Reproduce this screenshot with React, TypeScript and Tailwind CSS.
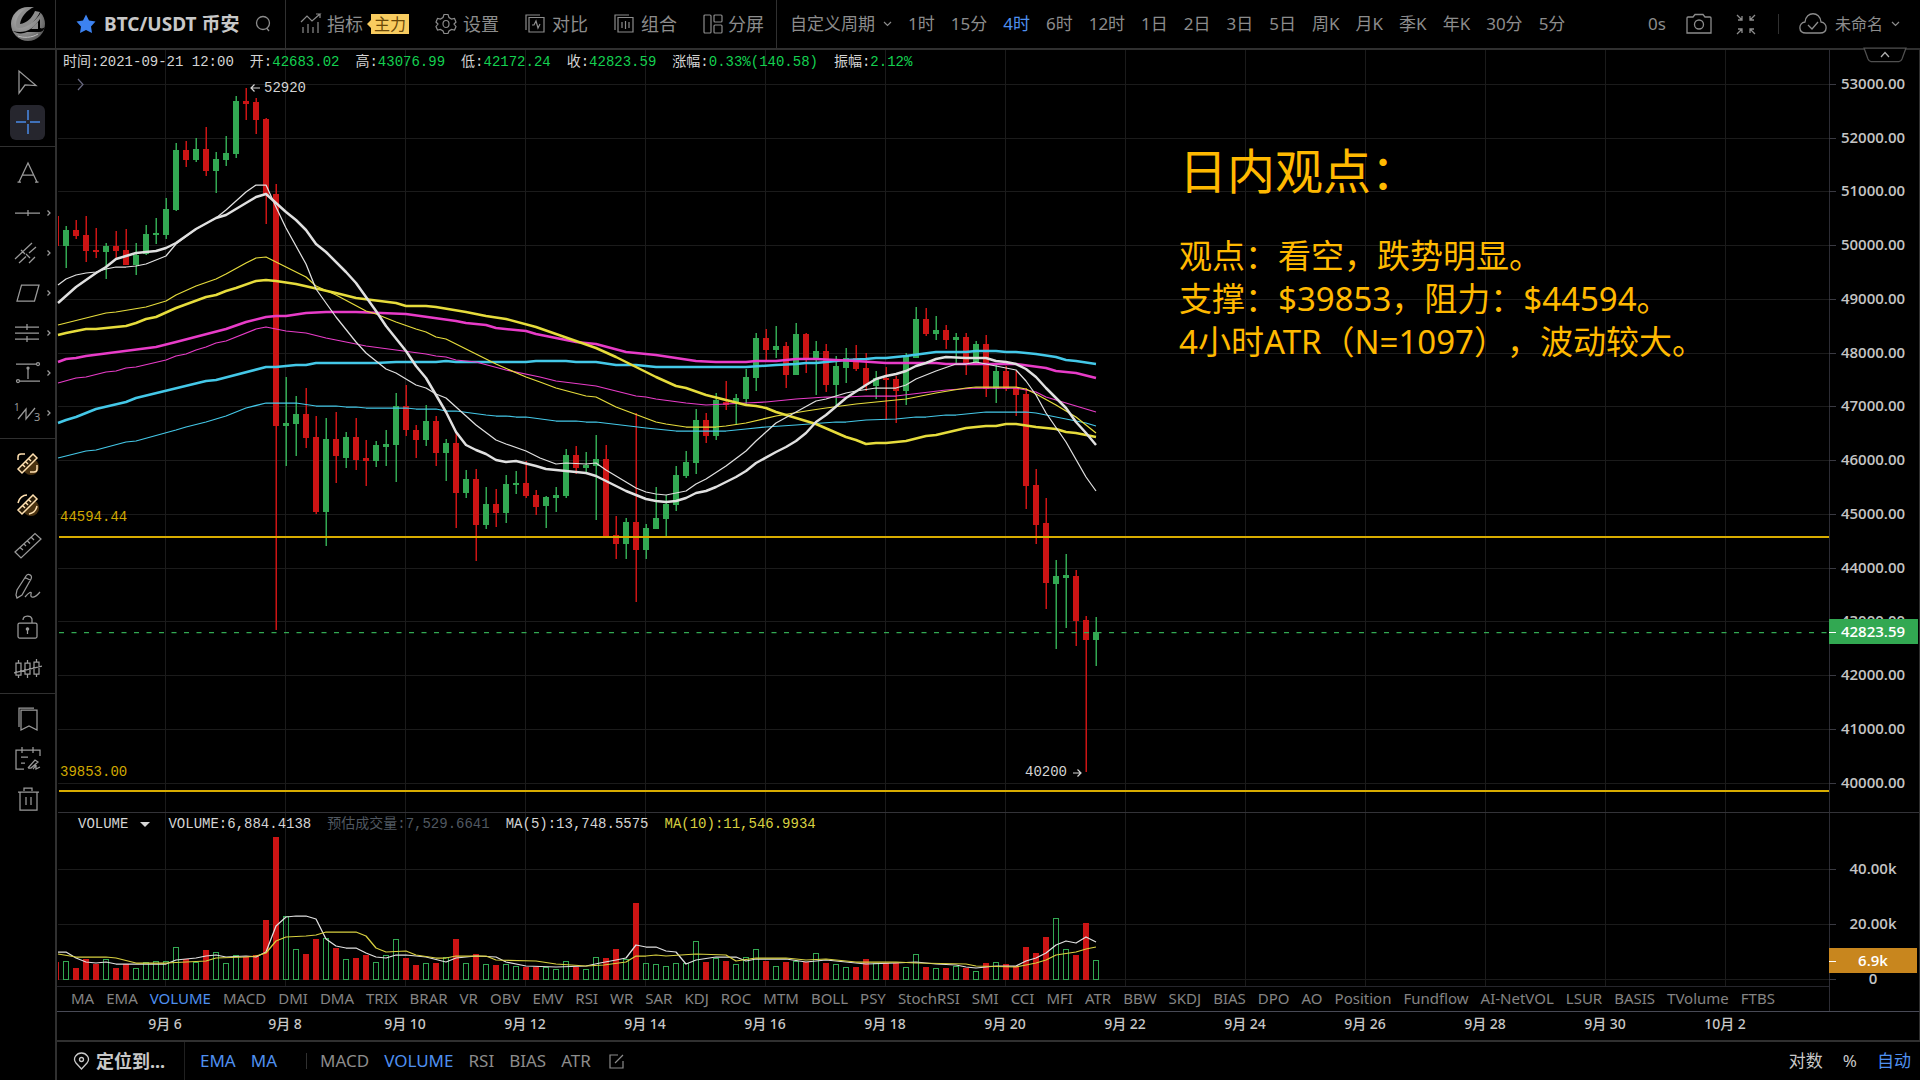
import { useState } from 'react';
import type { ReactNode } from 'react';

type Candle = [up: 0 | 1, high: number, top: number, bottom: number, low: number, volume: number];

// 每根K线：[涨跌, 最高, 实体上沿, 实体下沿, 最低, 成交量柱顶]
const candles: Candle[] = [
  [0, 216, 216, 246, 246, 962], [1, 226, 230, 246, 268, 961], [0, 220, 230, 236, 239, 968], [0, 216, 235, 251, 262, 959],
  [0, 228, 250, 252, 258, 964], [1, 243, 246, 252, 279, 959], [0, 231, 246, 251, 259, 968], [0, 229, 250, 265, 265, 964],
  [1, 243, 255, 265, 275, 968], [1, 225, 234, 254, 255, 962], [1, 218, 233, 235, 244, 961], [1, 198, 209, 235, 239, 961],
  [1, 143, 150, 210, 211, 947], [0, 141, 150, 160, 167, 959], [1, 138, 149, 160, 162, 962], [0, 127, 149, 171, 176, 950],
  [1, 152, 159, 171, 193, 952], [1, 136, 153, 160, 166, 963], [1, 96, 101, 154, 158, 955], [0, 88, 101, 104, 120, 957],
  [0, 98, 102, 120, 134, 955], [0, 118, 119, 195, 224, 920], [0, 184, 194, 426, 630, 837], [1, 377, 423, 426, 466, 916],
  [1, 396, 414, 424, 456, 949], [0, 388, 414, 438, 448, 954], [0, 416, 437, 512, 514, 939], [1, 418, 439, 512, 546, 938],
  [0, 412, 439, 456, 483, 948], [1, 432, 437, 458, 468, 959], [0, 418, 437, 460, 470, 958], [0, 440, 458, 461, 486, 955],
  [1, 441, 445, 461, 467, 962], [1, 430, 444, 447, 466, 955], [1, 393, 406, 445, 482, 939], [0, 385, 406, 430, 436, 958],
  [0, 425, 430, 440, 458, 965], [1, 405, 421, 440, 446, 963], [0, 416, 421, 453, 466, 963], [1, 439, 443, 453, 481, 957],
  [0, 433, 443, 493, 528, 939], [1, 470, 479, 493, 498, 963], [0, 469, 479, 525, 561, 954], [1, 487, 504, 525, 529, 964],
  [0, 489, 504, 513, 527, 965], [1, 475, 484, 513, 523, 964], [1, 471, 483, 485, 494, 966], [0, 461, 483, 496, 498, 967],
  [0, 490, 495, 507, 515, 967], [1, 496, 497, 506, 528, 967], [1, 487, 495, 498, 512, 969], [1, 449, 455, 496, 498, 961],
  [0, 446, 455, 468, 474, 967], [1, 452, 465, 468, 472, 969], [1, 435, 459, 466, 520, 957], [0, 445, 459, 536, 536, 958],
  [0, 516, 535, 544, 559, 949], [1, 518, 522, 544, 559, 959], [0, 413, 522, 550, 602, 903], [1, 524, 528, 550, 559, 963],
  [1, 487, 518, 529, 529, 964], [1, 495, 504, 519, 537, 966], [1, 466, 475, 505, 511, 963], [1, 451, 462, 476, 478, 963],
  [1, 409, 420, 463, 474, 941], [0, 413, 420, 436, 443, 962], [1, 393, 400, 436, 440, 958], [0, 381, 402, 405, 410, 961],
  [1, 394, 398, 403, 424, 964], [1, 369, 377, 399, 404, 957], [1, 333, 338, 378, 391, 949], [0, 329, 338, 350, 360, 961],
  [1, 326, 346, 350, 358, 966], [0, 342, 346, 375, 388, 962], [1, 323, 334, 375, 375, 961], [0, 333, 334, 360, 373, 962],
  [1, 341, 351, 360, 395, 953], [0, 344, 351, 385, 392, 963], [1, 356, 366, 385, 405, 964], [1, 348, 358, 368, 383, 967],
  [0, 345, 358, 369, 371, 967], [0, 353, 368, 385, 391, 959], [1, 371, 378, 386, 399, 963], [0, 367, 378, 380, 420, 963],
  [0, 376, 379, 391, 423, 963], [1, 353, 356, 391, 405, 967], [1, 307, 319, 358, 358, 954], [0, 308, 319, 334, 336, 967],
  [1, 316, 330, 334, 340, 968], [0, 325, 330, 340, 349, 968], [1, 333, 337, 340, 363, 966], [0, 333, 337, 363, 375, 968],
  [1, 341, 344, 363, 363, 971], [0, 335, 344, 389, 397, 963], [1, 365, 371, 389, 403, 962], [0, 366, 371, 389, 391, 964],
  [0, 371, 388, 395, 416, 966], [0, 388, 394, 486, 509, 947], [0, 469, 485, 525, 544, 953], [0, 498, 523, 583, 609, 937],
  [1, 560, 576, 584, 649, 918], [1, 554, 575, 578, 628, 949], [0, 570, 576, 621, 646, 955], [0, 616, 620, 640, 772, 923],
  [1, 617, 632, 640, 666, 960],
];

const averages = [
  {
    color: '#44c8e8',
    width: 1.25,
    points: '58,458 86,451 96,450 126,442 136,441 176,430 186,427 206,422 226,416 246,408 266,403 296,403 316,406 336,406 346,407 356,407 366,408 406,408 416,409 436,409 446,411 456,411 486,415 496,416 506,416 516,417 526,417 556,421 576,421 586,422 596,422 646,428 676,431 726,431 746,429 766,427 796,425 836,422 846,422 866,420 896,419 916,417 926,417 946,415 956,415 986,412 1026,412 1036,413 1046,415 1086,423 1096,426',
  },
  {
    color: '#44c8e8',
    width: 2.5,
    points: '58,423 66,420 76,417 96,409 126,402 136,398 206,381 216,380 266,367 276,367 296,365 306,365 316,363 376,363 396,362 436,362 446,361 456,362 526,362 536,361 566,361 576,362 596,362 616,365 636,365 656,367 746,367 776,365 796,364 806,363 816,363 846,360 866,359 876,358 886,358 906,356 936,352 966,352 976,351 996,351 1006,352 1016,352 1036,354 1056,357 1066,360 1076,361 1096,364',
  },
  {
    color: '#e83cc8',
    width: 1.25,
    points: '58,383 76,378 86,377 106,372 116,371 126,368 136,367 166,360 176,356 186,354 196,350 206,347 216,343 226,341 256,329 266,327 286,331 306,333 326,338 336,340 346,342 366,346 426,354 436,356 446,357 456,360 476,362 506,370 540,377 556,381 596,386 636,396 646,397 656,399 686,403 706,405 746,403 766,402 776,401 796,399 826,397 846,397 866,396 896,396 946,390 976,388 1016,388 1026,390 1036,392 1046,397 1056,400 1066,403 1096,412',
  },
  {
    color: '#e83cc8',
    width: 2.5,
    points: '58,362 66,359 76,358 86,356 156,347 176,342 226,329 246,322 266,317 276,316 286,316 306,313 326,312 356,312 406,314 456,321 466,323 486,325 496,328 526,331 536,334 556,338 576,342 596,344 626,352 656,355 696,361 716,362 746,362 756,361 776,361 796,359 816,359 856,361 886,363 936,363 946,364 1016,364 1046,368 1056,371 1076,373 1096,378',
  },
  {
    color: '#e6dc3c',
    width: 1.25,
    points: '58,325 106,313 116,312 146,307 166,301 176,295 196,286 216,279 226,274 246,263 256,258 266,257 306,277 316,286 336,295 366,311 376,314 396,322 416,329 426,332 436,337 446,339 496,364 526,377 540,382 556,388 586,396 596,397 616,407 656,422 666,424 686,427 716,427 726,426 746,423 776,416 806,411 826,408 856,404 866,403 886,401 906,399 936,393 966,388 976,387 1016,387 1026,389 1036,394 1056,405 1076,417 1096,433',
  },
  {
    color: '#e6dc3c',
    width: 2.5,
    points: '58,335 66,333 86,329 96,329 126,326 136,323 146,319 156,317 176,308 206,297 216,295 226,291 236,288 256,281 266,280 276,281 296,284 336,293 356,298 396,303 406,306 426,306 436,307 466,312 486,316 506,319 536,327 576,341 596,348 616,357 636,367 656,377 676,386 686,388 706,395 746,405 756,406 766,408 776,412 816,424 846,437 856,440 866,444 876,443 886,443 906,441 926,436 936,435 966,428 986,426 996,426 1006,424 1016,424 1036,427 1056,429 1066,432 1076,433 1096,437',
  },
  {
    color: '#e0e0e0',
    width: 1.25,
    points: '58,285 66,279 76,275 86,273 96,272 106,269 116,267 126,267 136,266 146,264 166,256 176,244 196,229 216,218 226,210 236,201 246,192 256,185 266,185 276,207 286,228 306,264 316,289 336,317 356,342 366,353 386,369 396,373 416,385 426,388 436,394 446,398 456,407 466,416 476,425 496,440 506,444 526,451 540,458 556,464 566,463 586,464 596,463 606,470 616,476 626,482 636,488 646,492 656,494 666,495 686,491 696,484 706,479 726,466 746,451 756,441 776,423 796,412 816,401 826,399 846,393 856,391 876,388 896,388 906,385 916,379 936,371 956,364 966,364 976,362 986,364 1006,368 1016,370 1026,381 1036,395 1046,413 1066,442 1086,477 1096,491',
  },
  {
    color: '#e0e0e0',
    width: 2.5,
    points: '58,303 76,287 96,273 106,267 116,259 126,256 136,253 156,251 166,248 176,243 196,229 216,218 226,215 246,203 256,197 266,194 286,212 296,220 306,230 316,244 326,252 346,272 356,283 376,311 386,326 406,351 416,366 426,378 436,395 446,412 456,432 466,445 476,450 486,454 496,460 506,462 516,461 536,466 546,469 566,471 586,473 596,476 606,481 626,491 646,499 656,501 666,502 676,501 686,498 696,493 706,491 716,487 736,477 746,471 756,463 776,452 786,447 796,441 806,433 816,422 826,415 846,398 866,385 876,379 886,376 896,374 906,371 916,366 926,363 936,359 946,357 966,358 986,358 996,361 1006,362 1016,364 1026,369 1036,377 1046,388 1066,408 1076,422 1086,433 1096,445',
  },
];

const volumeMa5 =
  '58,952 66,952 76,958 86,962 96,963 106,962 116,964 136,964 166,964 176,960 196,958 206,956 216,955 226,957 246,956 256,957 266,952 276,926 286,917 296,916 306,916 316,919 326,939 336,946 346,948 356,948 366,953 376,957 386,958 396,955 406,955 426,957 446,962 456,958 476,956 496,957 506,962 526,966 556,967 586,966 600,963 616,960 626,958 636,945 646,947 656,947 666,951 676,952 686,964 696,960 716,957 736,957 746,961 756,959 786,959 806,962 826,960 866,964 896,963 916,962 936,964 956,965 966,967 976,968 996,966 1016,966 1026,961 1036,958 1046,953 1056,945 1066,941 1076,943 1086,937 1096,942';
const volumeMa10 =
  '58,954 76,957 106,957 116,958 136,963 166,963 206,961 216,958 246,957 256,956 266,953 276,941 286,937 306,936 316,935 326,932 356,932 366,936 376,948 386,952 406,951 416,955 436,958 446,958 456,956 486,956 496,960 536,961 556,964 586,966 604,965 626,962 636,956 646,956 656,955 666,956 696,954 726,955 736,961 756,958 786,958 806,960 826,959 856,962 896,962 916,963 966,964 976,966 1016,967 1026,965 1036,963 1046,960 1056,955 1076,952 1086,949 1096,947';

const periods = ['1时', '15分', '4时', '6时', '12时', '1日', '2日', '3日', '5日', '周K', '月K', '季K', '年K', '30分', '5分'];

const indicators = [
  'MA', 'EMA', 'VOLUME', 'MACD', 'DMI', 'DMA', 'TRIX', 'BRAR', 'VR', 'OBV', 'EMV', 'RSI', 'WR', 'SAR', 'KDJ', 'ROC', 'MTM',
  'BOLL', 'PSY', 'StochRSI', 'SMI', 'CCI', 'MFI', 'ATR', 'BBW', 'SKDJ', 'BIAS', 'DPO', 'AO', 'Position', 'Fundflow',
  'AI-NetVOL', 'LSUR', 'BASIS', 'TVolume', 'FTBS',
];

const dates = [
  '9月 6', '9月 8', '9月 10', '9月 12', '9月 14', '9月 16', '9月 18', '9月 20', '9月 22', '9月 24', '9月 26', '9月 28',
  '9月 30', '10月 2',
];

const prices = Array.from({ length: 14 }, (_, i) => 53000 - i * 1000);
const priceY = (price: number) => Math.floor(84.3 + (53000 - price) * 0.05377);

const RED = '#cc1414';
const GREEN = '#32a852';
const GRID = '#1b1b1b';
const MONO = "font-['Liberation_Mono','Noto_Sans_CJK_SC',monospace]";

function Icon({ w = 28, h = 28, sw = 1.25, children }: { w?: number; h?: number; sw?: number; children: ReactNode }) {
  return (
    <svg width={w} height={h} viewBox={`0 0 ${w} ${h}`} fill="none" stroke="currentColor" strokeWidth={sw} className="shrink-0" aria-hidden="true">
      {children}
    </svg>
  );
}

function Logo() {
  return (
    <svg width="36" height="36" viewBox="0 0 36 36" aria-hidden="true">
      <defs>
        <radialGradient id="ball" cx="0.35" cy="0.35" r="0.8">
          <stop offset="0" stopColor="#b0b0b0" />
          <stop offset="0.6" stopColor="#858585" />
          <stop offset="1" stopColor="#4c4c4c" />
        </radialGradient>
      </defs>
      <circle cx="18" cy="18" r="17" fill="url(#ball)" />
      {/* 上方羽翼 */}
      <path d="M7 19C7 11 13 4 22 1C27 1 30 3 31 6C27 14 19 20 11 20C9 20 7 20 7 19Z" fill="#000" />
      <path d="M6 19C6 11 11 4 20 1L24 1C17 4 11 11 10 18C17 17 22 12 25 5L30 6C26 15 18 22 9 22C7 22 6 21 6 19Z" fill="#8c8c8c" />
      {/* 下方弧线 */}
      <path d="M3 25C14 28 23 24 30 13L30 22C32 23 34 22 35 21C34 24 32 26 29 26L17 26C13 28 7 28 3 25Z" fill="#000" />
      <path d="M21 23L28 16L28 23Z" fill="#8a8a8a" />
      <path d="M8 30C13 32 22 32 28 28" stroke="#bdbdbd" fill="none" />
    </svg>
  );
}

const toolGroups: { className: string; itemClass: string; tools: { name: string; more?: boolean; icon: ReactNode }[] }[] = [
  {
    className: 'pt-3 pb-1',
    itemClass: 'h-10',
    tools: [
      { name: '光标', icon: <path d="M5 3V25L11 17L22 17.500Z" /> },
      { name: '十字光标', icon: <path strokeWidth="1.500" d="M2 14H12M16 14H26M14 2V12M14 16V26" /> },
    ],
  },
  {
    className: 'pt-[6px] pb-[5px]',
    itemClass: 'h-10',
    tools: [
      { name: '文字', icon: <path d="M5 23L14 4L23 23M8.500 16H19.500M3.500 23H7M21 23H24.500" /> },
      { name: '线段', more: true, icon: <path d="M1 14H26M14 11V17" /> },
      { name: '通道', more: true, icon: <path d="M1 20L18 4M5 24L12 17.500M15 14L22 8M15 24L21 18M7 11L11 15M12 15L16 19" /> },
      { name: '形状', more: true, icon: <path d="M7.500 6H25L20.500 22H3Z" /> },
      { name: '水平线', more: true, icon: <path d="M1 8H25M1 14H25M1 20H25M13 5V11M13 17V23" /> },
      {
        name: '测距',
        more: true,
        icon: (
          <>
            <path d="M2 5H22M6 22H26M14 9V20" />
            <circle cx="24" cy="5" r="1.500" />
            <circle cx="4" cy="22" r="1.500" />
            <circle cx="14" cy="9" r="1" />
          </>
        ),
      },
      {
        name: '波浪',
        more: true,
        icon: (
          <>
            <path d="M4 20L12 10V20L21 9" />
            <text x="0" y="12" fontSize="10" fill="currentColor" stroke="none">1</text>
            <text x="20" y="22" fontSize="11" fill="currentColor" stroke="none">3</text>
          </>
        ),
      },
    ],
  },
  {
    className: 'pt-1 pb-1',
    itemClass: 'h-[41px]',
    tools: [
      {
        name: '矩形测量',
        icon: (
          <g stroke="#ffe0b0" strokeWidth="1.500">
            <circle cx="17" cy="17" r="8" fill="#4a3210" stroke="none" />
            <path d="M4 10V7Q4 4 7 4H11M23 15V19Q23 22 20 22H16" />
            <path d="M4 19L19 4L23 8L8 23ZM9 15L11 17M12 12L14 14M15 9L17 11" fill="#2a1c08" />
          </g>
        ),
      },
      {
        name: '圆形测量',
        icon: (
          <g stroke="#ffe0b0" strokeWidth="1.500">
            <circle cx="17" cy="17" r="8" fill="#4a3210" stroke="none" />
            <path d="M4 12C5 7 9 4 13 4M23 15C22 20 20 22 15 23" />
            <path d="M4 19L19 4L23 8L8 23ZM9 15L11 17M12 12L14 14M15 9L17 11" fill="#2a1c08" />
          </g>
        ),
      },
      { name: '尺子', icon: <path d="M1 20L21 1.500L27 7L7 26ZM6 15.500L9 18M10 12L12 14M13.500 9L16 11.500M17.500 5.500L20 8" /> },
      { name: '画笔', icon: <path d="M2 22L3 17L12 3C14 0 19 2 17 6L8 22L3 25ZM11 4.500L17 7.500M11 24C15 19 18 18 17 21C16 26 21 25 26 19" /> },
      {
        name: '锁定',
        icon: (
          <>
            <rect x="4" y="9" width="19" height="15" rx="1.500" />
            <path d="M9 6C9 1 17 1 18 5V9M13.500 16V20" />
            <circle cx="13.500" cy="15" r="1.200" fill="currentColor" />
          </>
        ),
      },
      {
        name: 'K线形态',
        icon: <path d="M2 8H7V20H2ZM11 8H16V19H11ZM20 7H25V19H20ZM4.500 5V8M4.500 20V23M13.500 5V8M13.500 19V23M22.500 4V7M22.500 19V22M0 18L28 11" />,
      },
    ],
  },
  {
    className: 'pt-[5px]',
    itemClass: 'h-10',
    tools: [
      { name: '书签', icon: <path d="M7 5H23V25L15 21L7 25ZM5 22V3H20" /> },
      { name: '笔记', icon: <path d="M10 24H2V5H26V11M8 2V8M19 2V8M7 12H14M7 18H11M14 23L21 15L24 17L17 23H14M19 24L22 20V24L26 22" /> },
      { name: '删除', icon: <path d="M4 7H25M6 7V25H23V7M10 6V3H18V6M12 12V20M17 12V20" /> },
    ],
  },
];

function Toolbar() {
  const [active, setActive] = useState('十字光标');
  return (
    <aside className="w-[57px] shrink-0 divide-y divide-[#303030] border-r-2 border-[#303030]">
      {toolGroups.map((group) => (
        <div key={group.tools[0].name} className={`flex flex-col ${group.className}`}>
          {group.tools.map((tool) => (
            <button
              key={tool.name}
              aria-label={tool.name}
              onClick={() => setActive(tool.name)}
              className={`relative flex w-full items-center justify-center text-[#9a9a9a] ${group.itemClass}`}
            >
              <span
                className={`flex h-[35px] w-[35px] items-center justify-center rounded-md ${
                  active === tool.name ? 'bg-[#26262e] text-[#4a8ae8]' : ''
                }`}
              >
                <Icon>{tool.icon}</Icon>
              </span>
              {tool.more && (
                <span className="absolute right-1">
                  <Icon w={4} h={8}>
                    <path d="M0.500 1.500L3 4L0.500 6.500" />
                  </Icon>
                </span>
              )}
            </button>
          ))}
        </div>
      ))}
    </aside>
  );
}

function Header() {
  const [period, setPeriod] = useState('4时');
  return (
    <header className="flex h-[50px] shrink-0 items-stretch border-b-2 border-[#303030] text-[#8c8c8c]">
      <div className="flex w-14 shrink-0 items-center justify-center border-r border-[#303030]">
        <Logo />
      </div>
      <div className="flex w-[230px] shrink-0 items-center border-r border-[#303030] pl-5">
        <svg width="20" height="20" viewBox="0 0 20 20" fill="#3c82f0" aria-hidden="true">
          <path d="M10 0.500L13 6.500L19.500 7.500L15 12.500L16 19L10 16L4 19L5 12.500L0.500 7.500L7 6.500Z" />
        </svg>
        <h1 className="ml-2 text-[19px] font-bold text-[#c8c8c8]">BTC/USDT 币安</h1>
        <button aria-label="搜索" className="ml-4">
          <Icon w={18} h={18} sw={1.3}>
            <circle cx="8" cy="8" r="6.500" />
            <path d="M11.500 13L14 16" />
          </Icon>
        </button>
      </div>
      <nav className="flex w-[491px] shrink-0 items-center border-r border-[#303030] pl-[14px] text-lg">
        <button className="flex items-center gap-[5px]">
          <Icon w={22} h={22} sw={1.2}>
            <path d="M1 9L7 3L12 8L20 1H16M20 1V5M3 14V20M8 11V20M13 14V20M18 9V20" />
          </Icon>
          指标
        </button>
        <span className="relative ml-2 bg-[#f8cc60] px-[3px] text-base leading-5 text-[#6a4808]">
          <span className="absolute top-[6px] -left-1 h-0 w-0 border-y-4 border-r-4 border-y-transparent border-r-[#f8cc60]" />
          主力
        </span>
        <button className="ml-[26px] flex items-center gap-[6px]">
          <Icon w={22} h={22} sw={1.2}>
            <path d="M9 1.500H13L14 4.500L16.500 6L19.500 5.500L21 9L19 11L21 13.500L19.500 17L16.500 16.500L14 18L13 20.500H9L8 18L5.500 16.500L2.500 17L1 13.500L3 11L1 9L2.500 5.500L5.500 6L8 4.500Z" />
            <ellipse cx="11" cy="11" rx="3" ry="3.500" />
          </Icon>
          设置
        </button>
        <button className="ml-[26px] flex items-center gap-[6px]">
          <Icon w={21} h={20} sw={1.2}>
            <path d="M4 3.500H19V18H4ZM1 16V1H15M7 11L9 11L11 7L13 14L15 10" />
          </Icon>
          对比
        </button>
        <button className="ml-[26px] flex items-center gap-[6px]">
          <Icon w={21} h={20} sw={1.2}>
            <path d="M4 3.500H19V18H4ZM1 16V1H15M8 8V14M11.500 7V15M15 8V14" />
          </Icon>
          组合
        </button>
        <button className="ml-[26px] flex items-center gap-[5px]">
          <Icon w={20} h={20} sw={1.2}>
            <rect x="1" y="1" width="7" height="18" rx="1" />
            <rect x="11" y="1" width="8" height="7" rx="1" />
            <rect x="11" y="11" width="8" height="8" rx="1" />
          </Icon>
          分屏
        </button>
      </nav>
      <nav className="flex min-w-0 items-center gap-4 pb-px pl-[13px] text-[17px] whitespace-nowrap">
        <button className="flex items-center gap-2">
          自定义周期
          <Icon w={9} h={6} sw={1.2}>
            <path d="M1 1L4.500 4.500L8 1" />
          </Icon>
        </button>
        {periods.map((p) => (
          <button key={p} onClick={() => setPeriod(p)} className={p === period ? 'text-[#4f90f0]' : ''}>
            {p}
          </button>
        ))}
      </nav>
      <div className="ml-auto flex shrink-0 items-center pr-5 text-[17px]">
        <span>0s</span>
        <button aria-label="截图" className="ml-5">
          <Icon w={26} h={22} sw={1.3}>
            <path d="M2 4H7L9 1.500H17L19 4H24Q25 4 25 5V20H1V5Q1 4 2 4Z" />
            <ellipse cx="13" cy="11.500" rx="4.500" ry="4.500" />
          </Icon>
        </button>
        <button aria-label="退出全屏" className="ml-6">
          <Icon w={20} h={21} sw={1.3}>
            <path d="M1 1L6 6M6 2V6H2M19 1L14 6M14 2V6H18M1 20L6 15M2 15H6V19M19 20L14 15M18 15H14V19" />
          </Icon>
        </button>
        <span className="ml-[22px] h-5 w-px bg-[#303030]" />
        <button className="ml-5 flex items-center gap-2 text-base">
          <Icon w={28} h={22} sw={1.3}>
            <path d="M7 20C-1 20 -1 10 6 9C7 -2 21 -2 22 9C29 10 29 20 21 20ZM9 12L13 16L19 9" />
          </Icon>
          未命名
          <Icon w={9} h={6} sw={1.2}>
            <path d="M1 1L4.500 4.500L8 1" />
          </Icon>
        </button>
      </div>
    </header>
  );
}

function Chart() {
  return (
    <svg className="block h-[936px] w-full" aria-label="BTC/USDT 4时K线">
      <defs>
        <clipPath id="plot">
          <rect x="58" y="50" width="4000" height="936" />
        </clipPath>
      </defs>
      {/* 绘图区原点在 (57, 50) */}
      <svg x="-57" y="-50" width="100%" height="986" overflow="visible">
        <g stroke={GRID} shapeRendering="crispEdges">
          {prices.map((p) => (
            <line key={p} x1="58" x2="110%" y1={priceY(p) + 0.5} y2={priceY(p) + 0.5} />
          ))}
          {[869, 924, 979].map((y) => (
            <line key={y} x1="58" x2="110%" y1={y + 0.5} y2={y + 0.5} />
          ))}
          {dates.map((d, i) => (
            <line key={d} x1={165.5 + i * 120} x2={165.5 + i * 120} y1="50" y2="986" />
          ))}
          <line x1="58" x2="110%" y1="812.5" y2="812.5" stroke="#333338" />
        </g>

        <g clipPath="url(#plot)">
          {candles.map(([up, high, top, bottom, low, volume], i) => {
            const x = 56 + i * 10;
            const color = up ? GREEN : RED;
            return (
              <g key={x} fill={color}>
                <rect x={x - 0.5} y={high} width="1.500" height={low - high} />
                <rect x={x - 3} y={top} width="6" height={bottom - top} />
                {up ? (
                  <rect x={x - 2.5} y={volume + 0.5} width="5" height={979 - volume} fill="none" stroke={color} />
                ) : (
                  <rect x={x - 3} y={volume} width="6" height={980 - volume} />
                )}
              </g>
            );
          })}
        </g>

        <g fill="none" strokeLinejoin="round">
          {averages.map((line) => (
            <polyline key={line.points} points={line.points} stroke={line.color} strokeWidth={line.width} />
          ))}
          <polyline points={volumeMa5} stroke="#e0e0e0" strokeWidth="1.250" />
          <polyline points={volumeMa10} stroke="#d8d040" strokeWidth="1.250" />
        </g>

        <line x1="59" x2="110%" y1="537" y2="537" stroke="#d8ac00" strokeWidth="2" />
        <line x1="59" x2="110%" y1="791" y2="791" stroke="#d8ac00" strokeWidth="2" />
        <line x1="59" x2="110%" y1="632.500" y2="632.500" stroke={GREEN} strokeWidth="1.250" strokeDasharray="5 7.500" />

        <g className={MONO} fontSize="14" fill="#d4d4d4">
          <text x="60" y="521" fill="#d0a800">44594.44</text>
          <text x="60" y="776" fill="#d0a800">39853.00</text>
          <text x="264" y="92">52920</text>
          <text x="1025" y="776">40200</text>
          <g fill="none" stroke="#d4d4d4" strokeWidth="1.200">
            <path d="M260 88H251M254.500 84.500L251 88L254.500 91.500" />
            <path d="M1073 773H1081M1077.500 769.500L1081 773L1077.500 776.500" />
          </g>
        </g>
        <path d="M78 79L83 84.500L78 90" fill="none" stroke="#686880" strokeWidth="1.200" />
      </svg>
    </svg>
  );
}

function Axis() {
  return (
    <svg
      className="block h-[961px] w-full font-['Open_Sans','Noto_Sans',sans-serif] text-[15px] font-semibold"
      textAnchor="middle"
      fill="#c4c4c4"
    >
      <g transform="translate(0 -50)">
        <path d="M0.500 50V1011" stroke="#2c2c34" />
        <path d="M0 812.500H90" stroke="#333338" />
        {prices.map((p) => (
          <g key={p}>
            <path d={`M0 ${priceY(p) + 0.5}H7`} stroke="#3a3a42" />
            <text x="44" y={priceY(p) + 5}>{p.toFixed(2)}</text>
          </g>
        ))}
        {[['40.00k', 869], ['20.00k', 924], ['0', 979]].map(([label, y]) => (
          <g key={label}>
            <path d={`M0 ${y}.5H7`} stroke="#3a3a42" />
            <text x="44" y={Number(y) + 5}>{label}</text>
          </g>
        ))}
        <rect y="619" width="89" height="25" fill={GREEN} />
        <rect y="948" width="88" height="25" fill="#c8861e" />
        <path d="M0 632.500H7M0 961.500H7" stroke="#fff" />
        <g fill="#fff">
          <text x="44" y="637">42823.59</text>
          <text x="44" y="966">6.9k</text>
        </g>
      </g>
    </svg>
  );
}

const quote = [
  ['时间', '2021-09-21 12:00'],
  ['开', '42683.02'],
  ['高', '43076.99'],
  ['低', '42172.24'],
  ['收', '42823.59'],
  ['涨幅', '0.33%(140.58)'],
  ['振幅', '2.12%'],
];

export default function App() {
  const [sub, setSub] = useState('VOLUME');

  return (
    <div className="flex min-h-screen flex-col overflow-hidden bg-black font-['Noto_Sans','Noto_Sans_CJK_SC',sans-serif] text-[#c8c8c8]">
      <Header />
      <div className="flex flex-1">
        <Toolbar />
        <main className="flex min-w-0 flex-1 flex-col">
          <div className="flex border-r border-[#303030]">
            <div className="relative min-w-0 flex-1">
              <Chart />

              {/* 行情数据 */}
              <div className={`absolute top-0 left-[6px] flex h-6 items-center gap-4 text-sm whitespace-nowrap text-[#d4d4d4] ${MONO}`}>
                {quote.map(([label, value], i) => (
                  <span key={label}>
                    {label}:<span className={i === 0 ? '' : 'text-[#14d050]'}>{value}</span>
                  </span>
                ))}
              </div>

              {/* 观点标注 */}
              <div className="absolute top-[85px] left-[1122px] whitespace-nowrap text-[#ffb900] [text-spacing-trim:space-all]">
                <h2 className="text-5xl leading-[72px]">日内观点：</h2>
                <div className="mt-[27px] text-[33px] leading-[43px]">
                  <p>观点：看空，跌势明显。</p>
                  <p>支撑：$39853，阻力：$44594。</p>
                  <p>4小时ATR（N=1097），波动较大。</p>
                </div>
              </div>

              {/* 成交量数据 */}
              <div className={`absolute top-[764px] left-[21px] flex h-5 items-center gap-4 text-sm whitespace-nowrap text-[#d4d4d4] ${MONO}`}>
                <button className="mr-[2px] flex items-center gap-3">
                  VOLUME
                  <span className="h-0 w-0 border-x-[5px] border-t-[5px] border-x-transparent border-t-[#d8d8d8]" />
                </button>
                <span>VOLUME:6,884.4138</span>
                <span className="text-[#505860]">预估成交量:7,529.6641</span>
                <span>MA(5):13,748.5575</span>
                <span className="text-[#d8d040]">MA(10):11,546.9934</span>
              </div>

              {/* 指标切换 */}
              <nav className="flex h-[25px] items-center gap-3 overflow-hidden border-t border-[#26262c] pb-[3px] pl-[14px] text-[15px] leading-5 whitespace-nowrap text-[#848484]">
                {indicators.map((name) => (
                  <button key={name} onClick={() => setSub(name)} className={name === sub ? 'text-[#4f90f0]' : ''}>
                    {name}
                  </button>
                ))}
              </nav>
            </div>
            <div className="relative w-[90px] shrink-0">
              <Axis />
              <button aria-label="收起" className="absolute -top-[3px] right-3 text-[#505050]">
                <Icon w={44} h={16}>
                  <path d="M1 1L5 12Q6 14.500 8 14.500H36Q38 14.500 39 12L43 1Z" fill="#000" />
                  <path d="M18 10L22 5.500L26 10" stroke="#b0b0b0" />
                </Icon>
              </button>
            </div>
          </div>

          {/* 时间轴 */}
          <div className="flex h-[29px] items-center overflow-hidden border-t border-r border-t-[#484a56] border-r-[#303030] pb-1 pl-12 text-sm font-medium">
            {dates.map((d) => (
              <span key={d} className="w-[120px] shrink-0 text-center">
                {d}
              </span>
            ))}
          </div>

          <footer className="flex h-10 items-center border-t-2 border-[#303030] text-[17px] text-[#8c8c8c]">
            <button className="flex h-full w-32 items-center gap-[6px] border-r border-[#202020] pl-4 text-lg font-bold text-[#c8c8c8]">
              <Icon w={17} h={18} sw={1.3}>
                <path d="M8.500 17L3 11C-1 6 4 1 8.500 1S18 6 14 11Z" />
                <circle cx="8.500" cy="7.500" r="2" />
              </Icon>
              定位到...
            </button>
            <div className="flex items-center gap-[15px] pl-[15px]">
              <button className="text-[#4f90f0]">EMA</button>
              <button className="text-[#4f90f0]">MA</button>
              <span className="mx-[14px] h-4 w-px bg-[#303030]" />
              <button className="-ml-4">MACD</button>
              <button className="text-[#4f90f0]">VOLUME</button>
              <button>RSI</button>
              <button>BIAS</button>
              <button>ATR</button>
              <button aria-label="编辑指标" className="ml-[3px]">
                <Icon w={15} h={15} sw={1.2}>
                  <path d="M9 1H1V14H14V7M6 9L14 1" />
                </Icon>
              </button>
            </div>
            <div className="ml-auto flex items-center gap-5 pr-[9px]">
              <button className="text-[#c8c8c8]">对数</button>
              <button className="text-[#c8c8c8]">%</button>
              <button className="text-[#4f90f0]">自动</button>
            </div>
          </footer>
        </main>
      </div>
    </div>
  );
}
